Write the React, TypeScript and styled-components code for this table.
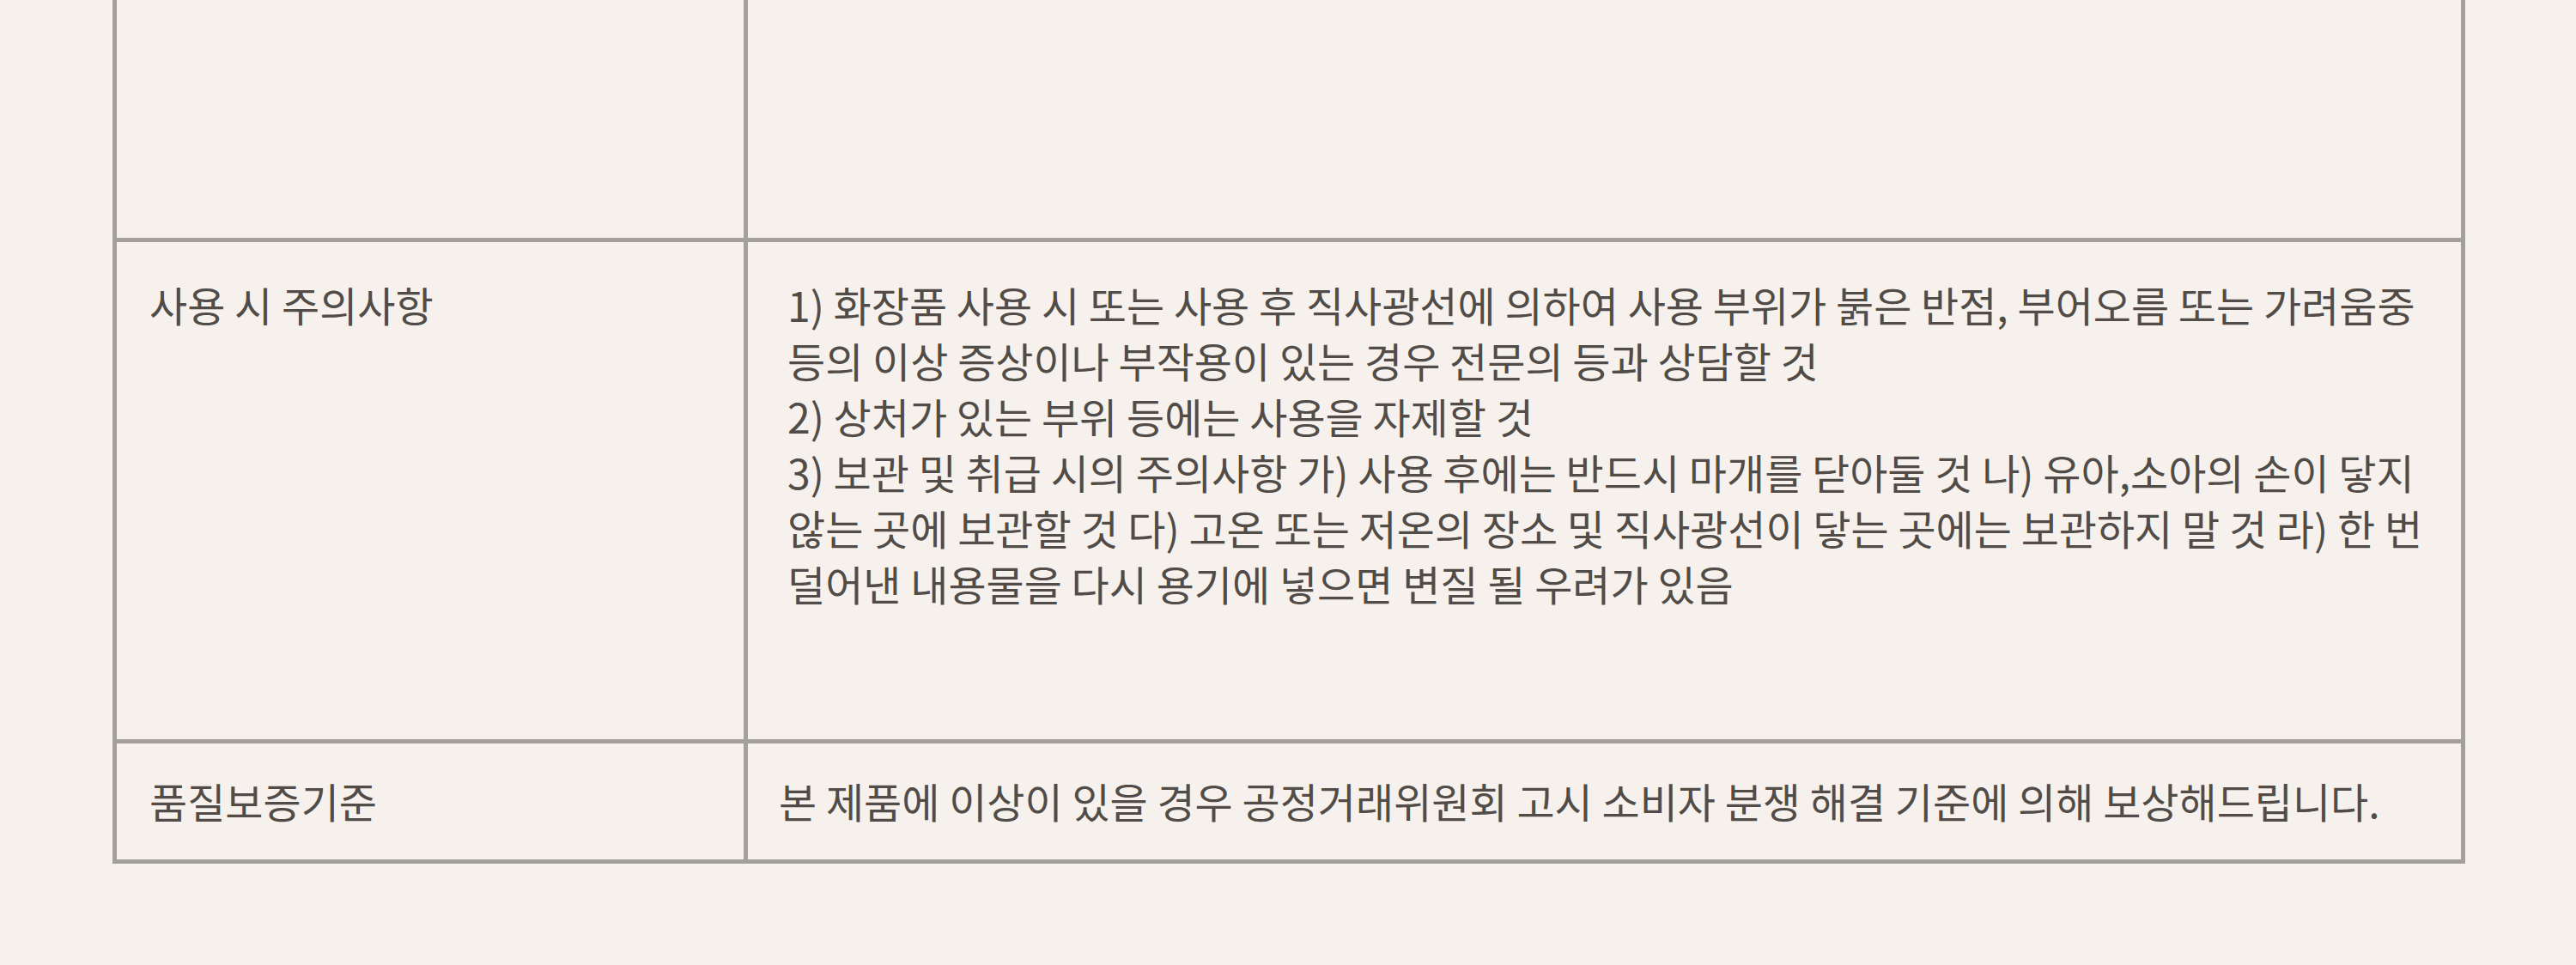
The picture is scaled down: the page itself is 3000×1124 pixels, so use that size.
import styled, { createGlobalStyle } from 'styled-components'

const GlobalStyle = createGlobalStyle`
  html, body {
    margin: 0;
    padding: 0;
    background-color: #f6f1ec;
  }
  body {
    font-family: "Noto Sans CJK KR", "Noto Sans", sans-serif;
    color: #514c47;
  }
`

const Page = styled.div`
  width: 3000px;
  height: 1124px;
  overflow: hidden;
  background-color: #f6f1ec;
`

const Table = styled.div`
  margin-left: 131px;
  width: 2740px;
  border-left: 5px solid #a3a09b;
  border-right: 5px solid #a3a09b;
  box-sizing: border-box;
`

const Row = styled.div<{ $height?: number }>`
  display: grid;
  grid-template-columns: 735px 1fr;
  border-bottom: 5px solid #a3a09b;
  ${({ $height }) => ($height ? `height: ${$height}px;` : '')}
`

const Cell = styled.div<{ $pt?: number; $pb?: number; $pl?: number }>`
  box-sizing: border-box;
  padding: ${({ $pt = 40 }) => $pt}px 10px ${({ $pb = 40 }) => $pb}px
    ${({ $pl = 38 }) => $pl}px;
  font-size: 48px;
  line-height: 65px;
`

const Label = styled(Cell)`
  border-right: 5px solid #a3a09b;
`

const Content = styled(Cell)`
  word-break: keep-all;
  white-space: nowrap;
`

const App = () => {
  return (
    <Page>
      <GlobalStyle />
      <Table>
        <Row $height={277}>
          <Label />
          <Content />
        </Row>
        <Row>
          <Label $pt={40} $pb={149}>사용 시 주의사항</Label>
          <Content $pt={40} $pb={149} $pl={46}>
            1) 화장품 사용 시 또는 사용 후 직사광선에 의하여 사용 부위가 붉은 반점, 부어오름 또는 가려움중
            <br />
            등의 이상 증상이나 부작용이 있는 경우 전문의 등과 상담할 것
            <br />
            2) 상처가 있는 부위 등에는 사용을 자제할 것
            <br />
            3) 보관 및 취급 시의 주의사항 가) 사용 후에는 반드시 마개를 닫아둘 것 나) 유아,소아의 손이 닿지
            <br />
            않는 곳에 보관할 것 다) 고온 또는 저온의 장소 및 직사광선이 닿는 곳에는 보관하지 말 것 라) 한 번
            <br />
            덜어낸 내용물을 다시 용기에 넣으면 변질 될 우려가 있음
          </Content>
        </Row>
        <Row>
          <Label $pt={34} $pb={36}>품질보증기준</Label>
          <Content $pt={34} $pb={36} $pl={36}>
            본 제품에 이상이 있을 경우 공정거래위원회 고시 소비자 분쟁 해결 기준에 의해 보상해드립니다.
          </Content>
        </Row>
      </Table>
    </Page>
  )
}

export default App
